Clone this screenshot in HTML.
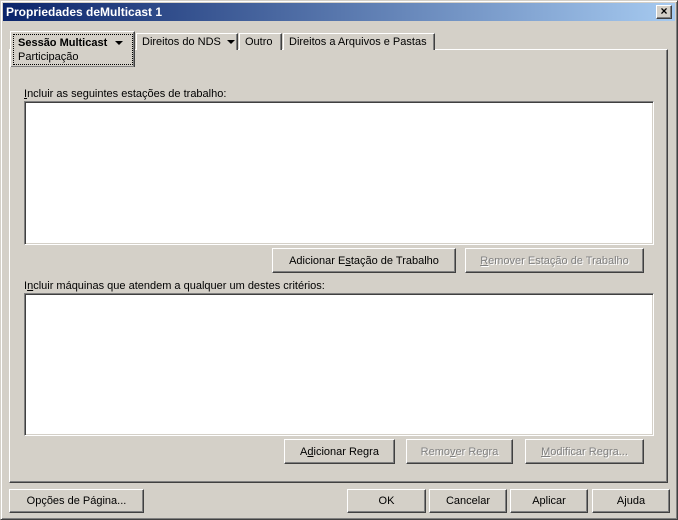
<!DOCTYPE html><html><head><style>
*{box-sizing:border-box;margin:0;padding:0}
body{width:678px;height:520px;background:#d4d0c8;font:11px "Liberation Sans",sans-serif;color:#000;position:relative;overflow:hidden}
.a{position:absolute;white-space:nowrap}
.win{left:0;top:0;width:678px;height:520px;border:1px solid;border-color:#d4d0c8 #404040 #404040 #d4d0c8;box-shadow:inset 1px 1px #fff,inset -1px -1px #808080}
.title{left:3px;top:3px;width:672px;height:18px;background:linear-gradient(90deg,#0a246a,#a6caf0);color:#fff;font-weight:bold;font-size:12px;line-height:18px;padding-left:3px}
.btn{position:absolute;white-space:nowrap;background:#d4d0c8;border:1px solid;border-color:#fff #404040 #404040 #fff;box-shadow:inset -1px -1px #808080;text-align:center;line-height:22px}
.dis{color:#808080;text-shadow:1px 1px #fff}
.list{position:absolute;background:#fff;border:1px solid;border-color:#808080 #fff #fff #808080;box-shadow:inset 1px 1px #404040,inset -1px -1px #d4d0c8}
.tab{position:absolute;white-space:nowrap;top:33px;height:17px;border:1px solid;border-color:#fff #404040 transparent #fff;border-bottom:none;box-shadow:inset -1px 0 #808080;padding:2px 5px;line-height:13px;background:#d4d0c8}
.arr{display:inline-block;width:0;height:0;border-left:4px solid transparent;border-right:4px solid transparent;border-top:4px solid #000;vertical-align:middle;margin-left:6px}
u{text-decoration:underline}
</style></head><body>
<div class="a win"></div>
<div class="a title">Propriedades deMulticast 1</div>
<div class="btn" style="left:656px;top:5px;width:16px;height:14px;line-height:11px;font-weight:bold;font-size:12px">×</div>
<div class="a" style="left:9px;top:49px;width:659px;height:434px;border:1px solid;border-color:#fff #404040 #404040 #fff;box-shadow:inset -1px -1px #808080"></div>
<div class="tab" style="left:136px;width:102px;font-size:11px">Direitos do NDS<span class="arr"></span></div>
<div class="tab" style="left:239px;width:43px">Outro</div>
<div class="tab" style="left:283px;width:152px">Direitos a Arquivos e Pastas</div>
<div class="a" style="left:10px;top:31px;width:125px;height:36px;border:1px solid;border-color:#fff #404040 #404040 #fff;box-shadow:inset -1px -1px #808080;background:#d4d0c8;border-bottom:none"></div>
<div class="a" style="left:13px;top:34px;width:120px;height:31px;border:1px dotted #000;padding:1px 4px;line-height:14px"><b>Sessão Multicast</b><span class="arr" style="margin-left:8px"></span><br>Participação</div>
<div class="a" style="left:24px;top:88px"><u>I</u>ncluir as seguintes estações de trabalho:</div>
<div class="list" style="left:24px;top:101px;width:630px;height:144px"></div>
<div class="btn" style="left:272px;top:248px;width:184px;height:25px;line-height:24px">Adicionar E<u>s</u>tação de Trabalho</div>
<div class="btn dis" style="left:465px;top:248px;width:179px;height:25px;line-height:24px"><u>R</u>emover Estação de Trabalho</div>
<div class="a" style="left:24px;top:280px">I<u>n</u>cluir máquinas que atendem a qualquer um destes critérios:</div>
<div class="list" style="left:24px;top:293px;width:630px;height:143px"></div>
<div class="btn" style="left:284px;top:439px;width:111px;height:25px;line-height:24px">A<u>d</u>icionar Regra</div>
<div class="btn dis" style="left:406px;top:439px;width:107px;height:25px;line-height:24px">Remo<u>v</u>er Regra</div>
<div class="btn dis" style="left:525px;top:439px;width:119px;height:25px;line-height:24px"><u>M</u>odificar Regra...</div>
<div class="btn" style="left:9px;top:489px;width:135px;height:24px">Opções de Pá<u>g</u>ina...</div>
<div class="btn" style="left:347px;top:489px;width:79px;height:24px">OK</div>
<div class="btn" style="left:429px;top:489px;width:78px;height:24px">Cancelar</div>
<div class="btn" style="left:510px;top:489px;width:78px;height:24px">Aplicar</div>
<div class="btn" style="left:592px;top:489px;width:78px;height:24px">Ajuda</div>
</body></html>
